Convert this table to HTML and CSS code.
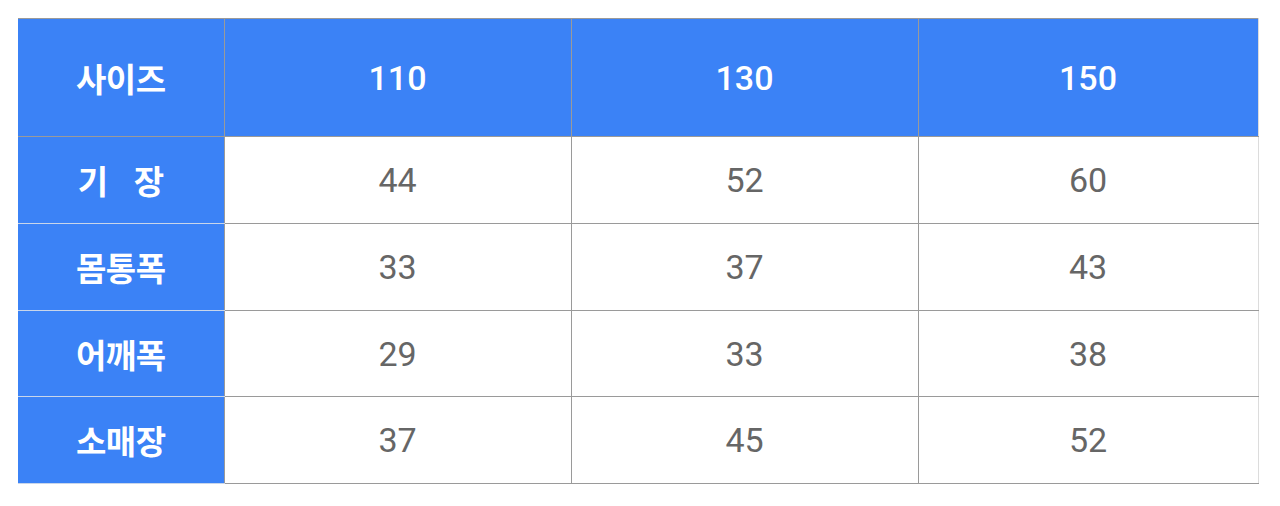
FILE: index.html
```html
<!DOCTYPE html>
<html lang="ko">
<head>
<meta charset="utf-8">
<link rel="stylesheet" href="styles.css">
</head>
<body>
<table class="size-table">
  <colgroup>
    <col class="c-label">
    <col class="c-val">
    <col class="c-val">
    <col class="c-last">
  </colgroup>
  <thead>
    <tr class="head-row">
      <th class="label">사이즈</th>
      <th class="hnum">110</th>
      <th class="hnum">130</th>
      <th class="hnum last">150</th>
    </tr>
  </thead>
  <tbody>
    <tr class="row">
      <th class="label">기&nbsp;&nbsp;&nbsp;장</th>
      <td>44</td><td>52</td><td class="last">60</td>
    </tr>
    <tr class="row">
      <th class="label">몸통폭</th>
      <td>33</td><td>37</td><td class="last">43</td>
    </tr>
    <tr class="row short">
      <th class="label">어깨폭</th>
      <td>29</td><td>33</td><td class="last">38</td>
    </tr>
    <tr class="row">
      <th class="label">소매장</th>
      <td>37</td><td>45</td><td class="last">52</td>
    </tr>
  </tbody>
</table>
</body>
</html>
```
FILE: styles.css
```css
html, body {
  margin: 0;
  padding: 0;
  background: #ffffff;
}
body {
  padding: 18px;
  font-family: Roboto, "Noto Sans CJK KR", sans-serif;
}
.size-table {
  border-collapse: collapse;
  table-layout: fixed;
  width: 1240px;
}
.c-label { width: 206px; }
.c-val { width: 347px; }
.c-last { width: 340px; }

.size-table th,
.size-table td {
  padding: 0;
  text-align: center;
  vertical-align: middle;
  border-top: 1px solid #9a9a9a;
  border-bottom: 1px solid #9a9a9a;
  border-left: 1px solid #9a9a9a;
}
.head-row th { height: 117px; }
.row th, .row td { height: 86px; }
.row.short th, .row.short td { height: 85px; }

.label {
  background: #3b82f6;
  color: #ffffff;
  font-family: "Noto Sans CJK KR", sans-serif;
  font-weight: 700;
  font-size: 33px;
  letter-spacing: -0.5px;
  border-left: none !important;
}
.row .label {
  border-top-color: #c9d6ea;
  border-bottom-color: #c9d6ea;
}
.hnum {
  background: #3b82f6;
  color: #ffffff;
  font-weight: 500;
  font-size: 34px;
}
.size-table td {
  color: #666666;
  font-size: 34px;
  font-weight: 400;
  background: #ffffff;
}
.size-table .last {
  border-right: 1px solid #dcdcdc;
}
```
